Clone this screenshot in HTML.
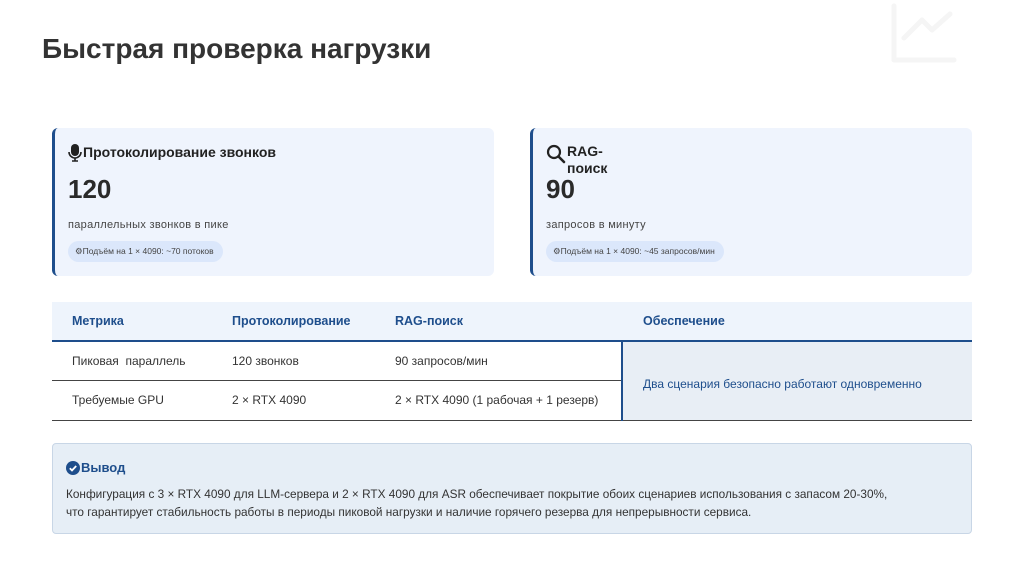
<!DOCTYPE html>
<html><head><meta charset="utf-8"><style>
*{margin:0;padding:0;box-sizing:border-box}
body{width:1024px;height:574px;background:#fff;font-family:"Liberation Sans",sans-serif;color:#333;position:relative;overflow:hidden}
.a{position:absolute}
h1{position:absolute;left:42px;top:33px;font-size:28px;font-weight:bold;color:#333}
.card{position:absolute;top:128px;width:442px;height:148px;background:#eff4fd;border-radius:6px;border-left:3px solid #1e4e8c}
.ct{position:absolute;left:13px;top:16px;font-size:14px;font-weight:bold;color:#222;display:flex;gap:1px}
.num{position:absolute;left:13px;font-size:26px;font-weight:bold;color:#2a2a2a}
.sub{position:absolute;left:13px;top:91px;font-size:11px;color:#444;letter-spacing:.3px}
.pill{position:absolute;left:13px;top:113px;height:21px;border-radius:11px;background:#dbe7fb;font-size:8.5px;color:#444;padding:0 9px 0 7px;line-height:21px}
table{position:absolute;left:52px;top:302px;width:920px;border-collapse:collapse;font-size:12px}
th{background:#eef4fc;color:#1e4e8c;text-align:left;font-weight:bold;font-size:12.5px;height:39px;border-bottom:2px solid #1e4e8c}
td{height:39.5px;border-bottom:1px solid #444;color:#333}
.m{background:#e8eef5;border-left:2px solid #1e4e8c;color:#1e4e8c;padding-left:20px;padding-top:6px}
</style></head><body>
<svg class="a" style="left:888px;top:2px" width="72" height="64" viewBox="0 0 72 64" fill="none" stroke="#f5f5f5" stroke-width="5" stroke-linecap="round" stroke-linejoin="round"><path d="M6 4V58H66"/><path d="M16 36L34 18L44 28L62 12"/></svg>
<h1>Быстрая проверка нагрузки</h1>

<div class="card" style="left:52px">
 <div class="ct"><svg width="14" height="18" viewBox="0 0 14 18"><rect x="3" y="0" width="8" height="12" rx="4" fill="#222"/><path d="M1 8a6 6 0 0 0 12 0" stroke="#222" stroke-width="1.6" fill="none"/><path d="M7 14v3M4 17h6" stroke="#222" stroke-width="1.6"/></svg>Протоколирование звонков</div>
 <div class="num" style="top:46px">120</div>
 <div class="sub">параллельных звонков в пике</div>
 <div class="pill">⚙Подъём на 1 × 4090: ~70 потоков</div>
</div>
<div class="card" style="left:530px">
 <div class="ct"><svg width="20" height="20" viewBox="0 0 20 20"><circle cx="8" cy="8" r="6" stroke="#222" stroke-width="2.2" fill="none"/><path d="M12.5 12.5L18 18" stroke="#222" stroke-width="2.6" stroke-linecap="round"/></svg><div style="line-height:17px;margin-top:-1px">RAG-<br>поиск</div></div>
 <div class="num" style="top:46px">90</div>
 <div class="sub">запросов в минуту</div>
 <div class="pill">⚙Подъём на 1 × 4090: ~45 запросов/мин</div>
</div>

<table>
<tr><th style="padding-left:20px;width:180px">Метрика</th><th style="width:163px">Протоколирование</th><th style="width:227px">RAG-поиск</th><th style="padding-left:21px">Обеспечение</th></tr>
<tr><td style="padding-left:20px">Пиковая&nbsp; параллель</td><td>120 звонков</td><td>90 запросов/мин</td><td class="m" rowspan="2">Два сценария безопасно работают одновременно</td></tr>
<tr><td style="padding-left:20px">Требуемые GPU</td><td>2 × RTX 4090</td><td>2 × RTX 4090 (1 рабочая + 1 резерв)</td></tr>
</table>

<div class="a" style="left:52px;top:443px;width:920px;height:91px;background:#e6eef6;border:1px solid #c8d6e6;border-radius:4px">
 <div class="a" style="left:13px;top:16px;font-size:13px;font-weight:bold;color:#1e4e8c;display:flex;align-items:center;gap:1px"><svg width="14" height="14" viewBox="0 0 14 14"><circle cx="7" cy="7" r="7" fill="#1e4e8c"/><path d="M3.8 7.2l2.2 2.2 4.2-4.4" stroke="#fff" stroke-width="1.8" fill="none"/></svg>Вывод</div>
 <div class="a" style="left:13px;top:41px;font-size:11.8px;line-height:18px;color:#333">Конфигурация с 3 × RTX 4090 для LLM-сервера и 2 × RTX 4090 для ASR обеспечивает покрытие обоих сценариев использования с запасом 20-30%,<br>что гарантирует стабильность работы в периоды пиковой нагрузки и наличие горячего резерва для непрерывности сервиса.</div>
</div>
</body></html>
